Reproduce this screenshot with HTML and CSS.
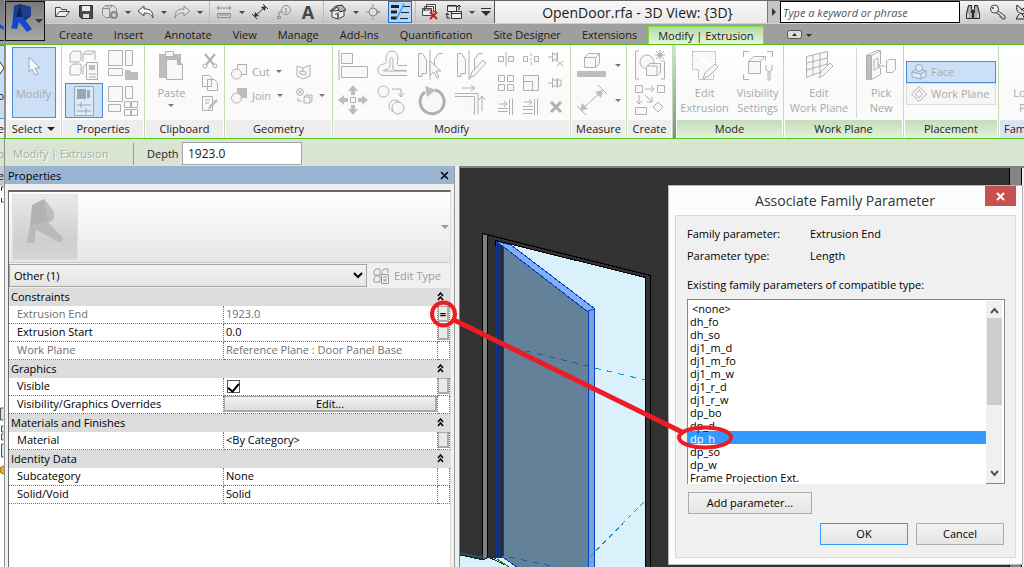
FILE: index.html
```html
<!DOCTYPE html>
<html lang="en">
<head>
<meta charset="utf-8">
<title>OpenDoor.rfa - 3D View: {3D}</title>
<link rel="stylesheet" href="styles.css">
</head>
<body>
<div class="desktop">
  <aside class="edge">
    <div class="edge-app"><svg width="4" height="40"><path d="M0 24l4 3v3l-4-2z" fill="#1a4fd0"/></svg></div>
    <div class="edge-tabs"></div>
    <div class="edge-ribbon"><svg width="4" height="16"><path d="M0 2l4 6-4 6" fill="#fff" stroke="#333"/></svg><span>o</span></div>
    <div class="edge-label">e</div>
    <div class="edge-options">o</div>
    <div class="edge-title">e</div>
    <div class="edge-body">
      <svg width="5" height="380"><path d="M2.500 5v-4h2M2.500 12v4h2" stroke="#333" fill="none"/><path d="M4.500 222h-3v12h3M4.500 240h-2v6h2M4.500 248h-2v6h2M4.500 258h-2v13h2" stroke="#555" fill="#cde"/><circle cx="5" cy="284" r="4" fill="#e8b020" stroke="#a67a10"/></svg>
    </div>
  </aside>

  <div class="window">
    <header class="top">
      <button class="app" aria-label="Application menu">
        <svg width="38" height="38" viewBox="0 0 38 38"><path d="M8 4l6-2 11 3v9l-5 4-11 3z" fill="#16327e"/><path d="M8 6l9-3 8 3v7l-7 2z" fill="#1c418e"/><path d="M8 6l7 7-2 5-6 9-1-1z" fill="#0f3ca8"/><path d="M9 15l8 0 9 12-5 3-8-10-2 7-6-1z" fill="#1148cc"/><path d="M14 3l2 11-6 1z" fill="#0c2354"/><path d="M29 17h8l-4 4z" fill="#333"/></svg>
      </button>
      <div class="top-main">
        <div class="titlebar">
          <div class="qat">
            <button aria-label="Open"><svg width="18" height="16"><path d="M2.500 12.500v-9h5l1 2h5v2M2.500 12.500l4-5h10l-4 5z" fill="#eee" stroke="#444"/></svg></button>
            <button aria-label="Save"><svg width="16" height="16"><path d="M1.500 1.500h13v13h-11l-2-2z" fill="#444b55" stroke="#333"/><path d="M4 2h8v5H4z" fill="#eee"/><path d="M5 10h6v4H5z" fill="#ddd"/></svg></button>
            <button aria-label="Synchronize"><svg width="18" height="16"><path d="M1.500 4.500l3-3h8l3 3v5l-4 4h-7l-3-3zM1.500 4.500h7l3-3M8.500 4.500v9M5 1.500l3 3" fill="#ddd" stroke="#8c8c8c"/><circle cx="13" cy="11" r="3" fill="#ccc" stroke="#888" stroke-width="2"/></svg></button>
            <button class="more" aria-label="Sync options"></button>
            <button aria-label="Undo"><svg width="18" height="16"><path d="M1 7l6-5v3c5 0 9 1 9 9-2-4-4-5-9-5v3z" fill="#f8f8f8" stroke="#444"/></svg></button>
            <button class="more" aria-label="Undo list"></button>
            <button aria-label="Redo"><svg width="18" height="16"><path d="M17 7l-6-5v3c-5 0-9 1-9 9 2-4 4-5 9-5v3z" fill="#ddd" stroke="#8c8c8c"/></svg></button>
            <button class="more" aria-label="Redo list"></button>
            <i class="sep"></i>
            <button aria-label="Measure"><svg width="16" height="16"><path d="M1 4h14M3 2L1 4l2 2M13 2l2 2-2 2M1.500 9.500h13v4h-13zM4 10v2M6 10v2M8 10v2M10 10v2M12 10v2" fill="none" stroke="#8a8a8a"/></svg></button>
            <button class="more" aria-label="Measure options"></button>
            <button aria-label="Aligned dimension"><svg width="18" height="16"><path d="M4 12L14 3M1 10l5 5M12 0l5 5" stroke="#333" fill="none"/><path d="M3 13l1-5 4 4zM15 2l-1 5-4-4z" fill="#333"/></svg></button>
            <button aria-label="Tag by category"><svg width="16" height="16"><circle cx="10" cy="6" r="4.500" fill="none" stroke="#8a8a8a"/><path d="M9 5l1-1v5M6 8H3v5M1.500 12.500h3v2h-3z" fill="none" stroke="#8a8a8a"/></svg></button>
            <button class="letter" aria-label="Text">A</button>
            <i class="sep"></i>
            <button aria-label="Default 3D view"><svg width="18" height="16"><path d="M3 7v6l6 2 6-3V6z" fill="#eee" stroke="#444"/><path d="M1 7l6-5 6-1 4 5-6 2-3-5-5 4z" fill="#aab0b8" stroke="#333"/><path d="M6 10h3v5M9 8v6" stroke="#444" fill="none"/></svg></button>
            <button class="more" aria-label="View options"></button>
            <button aria-label="Section"><svg width="16" height="16"><path d="M5 3l10 5-10 5z" fill="#999"/><circle cx="7" cy="8" r="4" fill="#ddd" stroke="#888"/><path d="M0 8h3M7 14v2M7 0v3" stroke="#888"/></svg></button>
            <button class="active" aria-label="Thin lines"><svg width="20" height="18"><path d="M1 3.500h8M1 9h6M1 15h6" stroke="#222" stroke-width="3"/><path d="M12 3.500h8M11 9.500h8M10 15.500h8" stroke="#222"/><path d="M14 1L6 17" stroke="#3a9cf0" stroke-width="1.500"/></svg></button>
            <i class="sep"></i>
            <button aria-label="Close hidden windows"><svg width="18" height="18"><path d="M5.500 5.500v-4h9v7h-3M3.500 8V3.500h9v6M1.500 5.500h9v7h-9zM2 7h8" fill="#eee" stroke="#444"/><path d="M9 9l7 7M16 9l-7 7" stroke="#d01818" stroke-width="2"/></svg></button>
            <button aria-label="Switch windows"><svg width="18" height="18"><path d="M2.500 2.500h9v6h-9zM6.500 8.500h10v7h-10zM7 10.500h9" fill="#eee" stroke="#333"/><path d="M3 3h8M14 7V3M12 4l2-2 2 2M2 11v4h3M1 12l1-2 2 2" stroke="#222" fill="none"/></svg></button>
            <button class="more" aria-label="Window list"></button>
            <button class="menu" aria-label="Customize toolbar"><svg width="10" height="8"><path d="M0 .500h10" stroke="#333"/><path d="M0 3h10L5 8z" fill="#333"/></svg></button>
          </div>
          <h1 class="doc">OpenDoor.rfa - 3D View: {3D}</h1>
          <div class="info">
            <button class="expand" aria-label="Expand search"><svg width="6" height="8"><path d="M1 0l4 4-4 4z" fill="#333"/></svg></button>
            <input class="search" type="text" placeholder="Type a keyword or phrase" aria-label="Search">
            <button aria-label="Find"><svg width="16" height="16"><path d="M3.500 1.500h3v3l1 2v8h-6v-5zM12.500 1.500h-3v3l-1 2v8h6v-5z" fill="#aab" stroke="#222"/><path d="M3 10v4M13 10v4" stroke="#fff"/><path d="M6 6h4v3H6z" fill="#333"/></svg></button>
            <button aria-label="Sign in"><svg width="18" height="16"><path d="M8 6l8 6v3h-3v-2h-2v-2l-4-2" fill="#ddd" stroke="#444"/><circle cx="5.500" cy="5" r="4" fill="#eee" stroke="#444"/><circle cx="4" cy="4" r="1" fill="#444"/></svg></button>
            <button aria-label="Subscription"><svg width="18" height="16"><path d="M3 1c-2 7 3 10 9 8zM12 3L7 6M5 10l-3 5h9l-3-5" fill="#ddd" stroke="#222"/></svg></button>
          </div>
        </div>
        <nav class="tabs">
          <a href="#create">Create</a><a href="#insert">Insert</a><a href="#annotate">Annotate</a><a href="#view">View</a><a href="#manage">Manage</a><a href="#addins">Add-Ins</a><a href="#quant">Quantification</a><a href="#site">Site Designer</a><a href="#ext">Extensions</a><a class="current" href="#modify">Modify | Extrusion</a>
          <button class="collapse" aria-label="Collapse ribbon"><svg width="26" height="10"><rect x=".500" y=".500" width="14" height="8" rx="2" fill="#ddd" stroke="#555"/><path d="M5 6l2.500-3L10 6zM19 4h6l-3 3z" fill="#333"/></svg></button>
        </nav>
      </div>
    </header>

    <section class="ribbon">
      <div class="panel p-select">
        <div class="tools"><button class="big on"><svg width="14" height="22"><path d="M2 1v15l3-3 3 6 3-1-3-6h5z" fill="#f4f8fc" stroke="#98a6b6"/></svg><span>Modify</span></button></div>
        <h2>Select <i class="tri"></i></h2>
      </div>
      <div class="panel p-props">
        <div class="tools grid2">
          <button aria-label="Type properties"><svg class="ic" width="30" height="30"><path d="M1 4l3-3h8v9l-2 2H1zM14 4l3-3h9v9M14 12V4h9l3-3M1 17l3-3h8v9l-2 2H1zM14 25v-8l3-3"/><rect x="17.500" y="12.500" width="11" height="17"/><path class="s" d="M20 15h6v5h-6z"/><path d="M20 24h7M20 27h7"/></svg></button>
          <button aria-label="Family category"><svg class="ic" width="30" height="30"><path d="M.500.500h14v15H.500zM17.500.500h7v15h-7zM.500 18.500h14v7H.500z"/><path class="s" d="M17 20h5l1 2h7v8H17z"/></svg></button>
          <button class="on" aria-label="Properties"><svg class="ic" width="22" height="30"><path d="M1.500.500h19v29h-19z"/><path class="s" d="M4 3h9v10H4zM14 4h3v8h-3z"/><path d="M4 19h14M4 25h14M8 16v6M13 22v6"/></svg></button>
          <button aria-label="Family types"><svg class="ic" width="30" height="30"><path d="M.500.500h14v15H.500zM17.500.500h7v12h-7zM.500 18.500h12v7H.500zM16.500 15.500h6v6h-6zM23.500 15.500h6v6h-6zM16.500 23.500h6v6h-6zM23.500 23.500h6v6h-6z"/></svg></button>
        </div>
        <h2>Properties</h2>
      </div>
      <div class="panel p-clip">
        <div class="tools">
          <button class="big"><svg class="ic" width="26" height="31"><path class="s" d="M1 4h22v24H1z"/><path d="M7.500 1.500h8v5h-8zM8.500 9.500h11l5 5v15h-16zM19.500 9.500v5h5"/></svg><span>Paste</span><i class="tri"></i></button>
          <div class="stack">
            <button aria-label="Cut"><svg class="ic" width="16" height="16"><path stroke-width="2" d="M3 1l9 11M13 1L4 12"/><circle cx="3" cy="13" r="2"/><circle cx="13" cy="13" r="2"/></svg></button>
            <button aria-label="Copy"><svg class="ic" width="16" height="16"><path d="M.500.500h7l2 2v9h-9zM5.500 4.500h7l3 3v8h-10z"/></svg></button>
            <button aria-label="Match type"><svg class="ic" width="16" height="16"><path d="M.500.500h10v14H.500zM3 4h5M3 7h4"/><path class="s" d="M14 3l2 2-6 6-5 4 3-6z"/></svg></button>
          </div>
        </div>
        <h2>Clipboard</h2>
      </div>
      <div class="panel p-geom">
        <div class="tools geom">
          <button><svg class="ic" width="17" height="16"><path d="M6.500.500h9v10h-9z"/><circle cx="5.500" cy="10" r="5"/></svg>Cut <i class="tri"></i></button>
          <button aria-label="Wall joins"><svg class="ic" width="16" height="16"><path d="M1 2l6 2 7-3v11l-7 3-6-3zM7 4v3M4 7l6 1v3l-6-1z"/></svg></button>
          <button><svg class="ic" width="17" height="16"><path class="s" d="M6 0h10v10H6z"/><circle cx="5.500" cy="10" r="5"/></svg>Join <i class="tri"></i></button>
          <button aria-label="Split face"><svg class="ic" width="17" height="16"><circle cx="4" cy="4" r="3.500"/><path d="M2 2l4 4M6 2L2 6M2 10v3h4M8 9l2-2h6v6l-2 2H8zM8 9h6v6"/></svg><i class="tri"></i></button>
        </div>
        <h2>Geometry</h2>
      </div>
      <div class="panel p-mod">
        <div class="tools">
          <div class="grid4">
            <button aria-label="Align"><svg class="ic" width="30" height="30"><path d="M1 0v30M3.500 3.500h11v10h-11zM3.500 16.500h26v11h-26z"/></svg></button>
            <button aria-label="Offset"><svg class="ic" width="30" height="30"><path d="M30 15.500h-8c-3 0-1-4-1-8s-3-6.500-6-6.500-6 2.500-6 6.500 1 5-1 6-7 1-7 6 3 6 6 6h23"/><path d="M30 20.500H19c-4 0-3-4-3-7s0-6-1.500-6-1.500 3-1.500 6 0 5-4 6-3 1.500-1 1.500h22"/></svg></button>
            <button aria-label="Mirror by axis"><svg class="ic" width="30" height="30"><path d="M2.500 3.500h4l4 6v14H6v3H2.500zM14 0v30M26.500 3.500h-4l-4 6v14"/><path d="M14 11v14l4-3 3 6 2-1-3-6h5z"/></svg></button>
            <button aria-label="Mirror by line"><svg class="ic" width="30" height="30"><path d="M2.500 3.500h4l4 6v14H6v3H2.500zM14 0v30M27.500 3.500h-4l-4 6v11M15 28l2-6L28 10l3 3-11 12z"/></svg></button>
            <button aria-label="Move"><svg class="ic" width="30" height="30"><path class="s" d="M15 0l5 6h-3v4h-4V6h-3zM15 30l5-6h-3v-4h-4v4h-3zM0 15l6-5v3h4v4H6v3zM30 15l-6-5v3h-4v4h4v3z"/><path d="M12.500 12.500h5v5h-5z"/></svg></button>
            <button aria-label="Copy elements"><svg class="ic" width="30" height="30"><circle cx="6.500" cy="6.500" r="5.500"/><circle cx="18" cy="21" r="6"/><circle cx="21" cy="23" r="6"/><path d="M15 4h9v7M21 8l3 4 3-4"/></svg></button>
            <button aria-label="Rotate"><svg class="ic" width="30" height="30"><path d="M9 7A12 12 0 1 0 19 5" stroke-width="3"/><path class="s" d="M9 1l11 4-9 7z"/></svg></button>
            <button aria-label="Trim to corner"><svg class="ic" width="30" height="30"><path d="M0 8.500h23v21M0 11.500h19.500v18M7 3h12M16 0l4 3-4 3M27 26V12M24 15l3-4 3 4"/></svg></button>
          </div>
          <div class="grid3">
            <button aria-label="Split"><svg class="ic" width="16" height="16"><path d="M.500 5.500h5v5h-5zM10.500 5.500h5v5h-5zM8 1v14"/></svg></button>
            <button aria-label="Split with gap"><svg class="ic" width="16" height="16"><path d="M.500 5.500h4v5h-4zM11.500 5.500h4v5h-4zM8 2v3M8 7v2M8 11v3"/></svg></button>
            <button aria-label="Unpin"><svg class="ic" width="16" height="16"><path d="M0 6h4M4.500 1v10M4 3h5v6H4M9.500 1v9M9 10l6 5M15 10l-6 5"/></svg></button>
            <button aria-label="Array"><svg class="ic" width="16" height="16"><path d="M.500.500h6v6h-6zM9.500.500h6v6h-6zM.500 9.500h6v6h-6zM9.500 9.500h6v6h-6z"/></svg></button>
            <button aria-label="Scale"><svg class="ic" width="16" height="16"><path d="M.500.500h15v15H.500zM.500 6.500h9v9"/></svg></button>
            <button aria-label="Pin"><svg class="ic" width="16" height="16"><path d="M0 8h4M4.500 3v10M4 5h5v6H4M9.500 3v10M10 5h3v6h-3"/></svg></button>
            <button aria-label="Trim single"><svg class="ic" width="16" height="16"><path d="M1 5h8M6 2l3 3-3 3M0 9.500h10M0 12.500h10M11.500 0v16M14.500 0v16"/></svg></button>
            <button aria-label="Trim multiple"><svg class="ic" width="16" height="16"><path d="M1 3h8M6 0l3 3-3 3M0 7.500h10M0 10.500h10M0 14.500h10M11.500 0v16M14.500 0v16"/></svg></button>
            <button aria-label="Delete"><svg class="ic" width="16" height="16"><path d="M3 3l10 10M13 3L3 13" stroke-width="3"/></svg></button>
          </div>
        </div>
        <h2>Modify</h2>
      </div>
      <div class="panel p-meas">
        <div class="tools rows">
          <button aria-label="Measure between"><svg class="ic" width="30" height="30"><path d="M7.500 7.500l4-4h11v10l-4 4h-11zM7.500 7.500h11v10M18.500 7.500l4-4"/><path class="s" d="M0 21h29v6H0z"/></svg><i class="tri"></i></button>
          <button aria-label="Dimension"><svg class="ic" width="30" height="30"><path d="M4 25L25 6M0 21l9 9M21 0l9 9"/><path class="s" d="M3 26l2-8 6 6zM26 5l-2 8-6-6z"/></svg><i class="tri"></i></button>
        </div>
        <h2>Measure</h2>
      </div>
      <div class="panel p-create">
        <div class="tools rows">
          <button aria-label="Create group"><svg class="ic" width="30" height="30"><path d="M4 1H.500v28H4M26 11h3.500v18H26"/><circle cx="12" cy="12" r="7"/><path d="M11.500 16.500l3-3h11v9l-3 3h-11zM12 16h10v9"/><circle cx="25" cy="5" r="2"/><path d="M25 0v10M20 5h10M21 1l8 8M29 1l-8 8"/></svg></button>
          <button aria-label="Create similar"><svg class="ic" width="30" height="30"><path d="M.500.500h7v7h-7zM22.500.500h7v7h-7zM.500 22.500h11v7H.500zM23 17l5 5-5 5-5-5zM10 4h9M16 1l3 3-3 3M4 10v9M1 16l3 3 3-3M10 10l7 7M12 17h5v-5"/></svg></button>
        </div>
        <h2>Create</h2>
      </div>
      <div class="divider"></div>
      <div class="panel p-mode context">
        <div class="tools">
          <button class="big"><svg class="ic" width="28" height="31"><path stroke-dasharray="2 1" d="M1.500 1.500h23v15M1.500 1.500v18h6v10h15v-6"/><path d="M12 29l2-6 10-9 3 3-9 9z"/></svg><span>Edit<br>Extrusion</span></button>
          <button class="big"><svg class="ic" width="32" height="31"><path d="M1.500 7V1.500H7M25 1.500h5.500V7M1.500 24v5.500H7M6.500 11.500l5-5h12v4M6.500 11.500h12v12h-12zM18.500 11.500l4-5M27 22v8"/><path d="M24 15v5l3 2 3-2v-5M26 22v8h2v-8"/></svg><span>Visibility<br>Settings</span></button>
        </div>
        <h2>Mode</h2>
      </div>
      <div class="panel p-work context">
        <div class="tools">
          <button class="big"><svg class="ic" width="28" height="31"><path d="M1.500 6.500l21-5v18l-21 8zM1.500 13l21-5M1.500 20l21-6M8 5v20M15 3v19"/><path d="M14 28l2-6 9-9 3 3-9 9z"/></svg><span>Edit<br>Work Plane</span></button>
          <i class="rule"></i>
          <button class="big"><svg class="ic" width="32" height="31"><path d="M1.500 5.500l10-5h4v24l-9 5h-5zM1.500 5.500h5v24M6.500 5.500l9-5M9 10l4-2v10l-4 2z"/><path class="s" d="M2 6h4v23H2z"/><path d="M13 16h7M16 13l-3 3 3 3M21.500 11.500l3-2h6v10l-3 3h-6z"/></svg><span>Pick<br>New</span></button>
        </div>
        <h2>Work Plane</h2>
      </div>
      <div class="panel p-place context">
        <div class="tools rows">
          <button class="opt on"><svg class="ic" width="16" height="16"><path d="M1 8l5-3 9 2v5l-5 3-9-2zM1 8l9 2 5-3M10 10v5"/><circle cx="8" cy="4" r="3.500"/></svg>Face</button>
          <button class="opt"><svg class="ic" width="16" height="16"><path d="M8 .500L15.500 8 8 15.500.500 8zM4.500 8L8 4l3.500 4L8 12z"/></svg>Work Plane</button>
        </div>
        <h2>Placement</h2>
      </div>
      <div class="panel p-fam">
        <div class="tools"><span class="cut">Lo<br>&nbsp;&nbsp;P</span></div>
        <h2>Fam</h2>
      </div>
    </section>

    <div class="options">
      <span class="mode">Modify | Extrusion</span>
      <label for="depth">Depth</label>
      <input id="depth" type="text" value="1923.0">
    </div>

    <main class="work">
      <section class="palette">
        <div class="palette-title"><h2>Properties</h2><button aria-label="Close properties"><svg width="9" height="9"><path d="M1 1l7 7M8 1L1 8" stroke="#000" stroke-width="1.500"/></svg></button></div>
        <div class="palette-body">
          <button class="type" aria-label="Type selector">
            <svg class="thumb" width="66" height="66"><defs><linearGradient id="tg" x2="0" y2="1"><stop offset="0" stop-color="#eaeaea"/><stop offset=".700" stop-color="#cfcfcf"/><stop offset="1" stop-color="#d6d6d6"/></linearGradient></defs><rect x=".500" y=".500" width="65" height="65" fill="url(#tg)" stroke="#e0e0e0"/><path d="M20 11l12-6 10 13-1 8-9 4-14 2z" fill="#b2b2b2"/><path d="M18 31l18-3 15 16-2 5-25-13-2 13h-7z" fill="#bababa"/><path d="M32 5l4 22 6-2V18z" fill="#bdbdbd"/></svg>
            <i class="tri"></i>
          </button>
          <div class="filter">
            <select aria-label="Filter"><option>Other (1)</option></select>
            <button><svg width="16" height="16"><path d="M1 3l2-2h4v6H1zM9 6V3l2-2h4v4M1 10l2-2h4v6H1z" fill="none" stroke="#9a9a9a"/><path d="M8.500 6.500h7v9h-7zM10 9h4M10 12h4M12 11v3" fill="none" stroke="#9a9a9a"/></svg>Edit Type</button>
          </div>
          <table>
            <colgroup><col class="c-name"><col><col class="c-btn"></colgroup>
            <tr class="group"><th colspan="3">Constraints<svg width="7" height="9"><path d="M1 4l2.500-3L6 4M1 8l2.500-3L6 8" fill="none" stroke="#000" stroke-width="1.500"/></svg></th></tr>
            <tr class="dim"><td>Extrusion End</td><td>1923.0</td><td><button class="tiny" aria-label="Associate parameter">=</button></td></tr>
            <tr><td>Extrusion Start</td><td>0.0</td><td><button class="tiny" aria-label="Associate start"></button></td></tr>
            <tr class="dim"><td>Work Plane</td><td>Reference Plane : Door Panel Base</td><td></td></tr>
            <tr class="group"><th colspan="3">Graphics<svg width="7" height="9"><path d="M1 4l2.500-3L6 4M1 8l2.500-3L6 8" fill="none" stroke="#000" stroke-width="1.500"/></svg></th></tr>
            <tr><td><label for="vis">Visible</label></td><td><input id="vis" type="checkbox" checked></td><td><button class="tiny" aria-label="Associate visible"></button></td></tr>
            <tr><td>Visibility/Graphics Overrides</td><td class="fill"><button class="wide">Edit...</button></td><td></td></tr>
            <tr class="group"><th colspan="3">Materials and Finishes<svg width="7" height="9"><path d="M1 4l2.500-3L6 4M1 8l2.500-3L6 8" fill="none" stroke="#000" stroke-width="1.500"/></svg></th></tr>
            <tr><td>Material</td><td>&lt;By Category&gt;</td><td><button class="tiny" aria-label="Associate material"></button></td></tr>
            <tr class="group"><th colspan="3">Identity Data<svg width="7" height="9"><path d="M1 4l2.500-3L6 4M1 8l2.500-3L6 8" fill="none" stroke="#000" stroke-width="1.500"/></svg></th></tr>
            <tr><td>Subcategory</td><td>None</td><td></td></tr>
            <tr><td>Solid/Void</td><td>Solid</td><td></td></tr>
          </table>
        </div>
      </section>
      <section class="view">
        <svg width="564" height="399" viewBox="460 168 564 399" shape-rendering="crispEdges">
          <path d="M505 243L645 278V567H490V562z" fill="#daf1fc"/>
          <path d="M483 234h4v326h-4z" fill="#808080"/>
          <path d="M487 235h9v324h-9z" fill="#303030"/>
          <path d="M496 242h7v316h-7z" fill="#1c2c4c"/>
          <path d="M503 244L588 311V567H518L503 557z" fill="#64819a"/>
          <path d="M496 241l15 4 84 64-7 3z" fill="#84aef8" stroke="#083fc4"/>
          <path d="M588 311l6-2V568h-6z" fill="#7aa3d8" stroke="#083fc4"/>
          <path d="M496.500 242V558M499.500 244V556M503.500 247V556" stroke="#0a38b4" fill="none"/>
          <path d="M482.500 560V233.500L650.500 275.500V567M487.500 558V236M495.500 240.500L645.500 277.500V567M495.500 240V246" stroke="#000" fill="none"/>
          <path d="M460 555l24 5 4-3 8 2 16 8H460z" fill="#daf1fc"/>
          <path d="M460 555l24 5 4-3 20 9M482.500 560v-6" stroke="#123" fill="none"/>
          <path d="M460 553l24 5" stroke="#2a5060" stroke-width="2"/>
          <path d="M497 559l12 8" stroke="#1c8a2c"/><path d="M501 556l16 11" stroke="#083fc4"/>
          <path d="M514 348L588 366M509 557L556 567" stroke="#175f92" stroke-dasharray="6 6"/>
          <path d="M595 368L645 380" stroke="#1096d0" stroke-dasharray="6 6"/>
          <path d="M644 502L580 567" stroke="#1096d0" stroke-dasharray="5 4"/>
          <path d="M1009.500 168V567M1021.500 168V567" stroke="#000"/><path d="M1010 168h11V567h-11z" fill="#858585"/><path d="M1022 168h2V567h-2z" fill="#eee"/>
        </svg>
      </section>
    </main>
  </div>

  <div class="dialog" role="dialog" aria-labelledby="dlg">
    <div class="dlg-head"><h2 id="dlg">Associate Family Parameter</h2><button aria-label="Close"><svg width="9" height="9"><path d="M1 1l7 7M8 1L1 8" stroke="#fff" stroke-width="2"/></svg></button></div>
    <div class="dlg-body">
      <dl><dt>Family parameter:</dt><dd>Extrusion End</dd><dt>Parameter type:</dt><dd>Length</dd></dl>
      <label for="params">Existing family parameters of compatible type:</label>
      <div class="listbox">
        <select id="params" size="14">
          <option>&lt;none&gt;</option><option>dh_fo</option><option>dh_so</option><option>dj1_m_d</option><option>dj1_m_fo</option><option>dj1_m_w</option><option>dj1_r_d</option><option>dj1_r_w</option><option>dp_bo</option><option>dp_d</option><option selected>dp_h</option><option>dp_so</option><option>dp_w</option><option>Frame Projection Ext.</option>
        </select>
        <div class="scroll">
          <svg width="9" height="7"><path d="M1 6l3.500-4L8 6" fill="none" stroke="#555" stroke-width="2"/></svg>
          <i></i>
          <svg width="9" height="7"><path d="M1 1l3.500 4L8 1" fill="none" stroke="#555" stroke-width="2"/></svg>
        </div>
      </div>
      <button class="btn add">Add parameter...</button>
      <div class="actions"><button class="btn ok">OK</button><button class="btn">Cancel</button></div>
    </div>
  </div>

  <svg class="markup" width="1024" height="567" fill="none" stroke="#ed1c24">
    <circle cx="443.500" cy="314" r="11.500" stroke-width="4"/>
    <path d="M454 320L684 433" stroke-width="5"/>
    <ellipse cx="705" cy="437.500" rx="26" ry="10" stroke-width="4"/>
  </svg>
</div>
</body>
</html>
```
FILE: styles.css
```css
* { box-sizing: border-box; }
body { margin: 0; font: 11px/16px "Open Sans", "Noto Sans", sans-serif; color: #1a1a1a; background: #f0f0f0; }
h1, h2, dl, dd { margin: 0; font-weight: normal; font-size: inherit; }
button, input, select { font: inherit; color: inherit; margin: 0; padding: 0; border-radius: 0; }
button { background: none; border: 0; display: flex; align-items: center; justify-content: center; }
svg { display: block; flex: none; }
a { color: inherit; text-decoration: none; }

.desktop { position: relative; display: flex; height: 100vh; overflow: hidden; }

.edge { width: 5px; flex: none; display: flex; flex-direction: column; overflow: hidden; border-right: 1px solid #8f8f8f; white-space: nowrap; background: #fff; }
.edge > div { flex: none; display: flex; justify-content: flex-end; align-items: center; }
.edge .edge-app { height: 41px; background: linear-gradient(#777, #999); border-bottom: 1px solid #111; }
.edge .edge-tabs { height: 4px; background: #9f9f9f; border-bottom: 1px solid #58c41c; }
.edge .edge-ribbon { height: 74px; background: #c5ddf5; border: 1px solid #4a8edb; border-width: 1px 0; flex-direction: column; align-items: flex-end; justify-content: center; gap: 12px; }
.edge .edge-label { height: 20px; background: #eee; border-bottom: 1px solid #58c41c; }
.edge .edge-options { height: 27px; padding-top: 2px; background: #d9e4d3; color: #a9a9a9; }
.edge .edge-title { height: 20px; background: #bccbdc; }
.edge .edge-body { flex: 1; align-items: flex-start; background: #fff; }

.window { flex: 1; min-width: 0; display: flex; flex-direction: column; }
.top { display: flex; height: 44px; background: #9f9f9f; border-top: 1px solid #6a6465; }
.app { width: 40px; height: 40px; border: 1px solid #111; background: linear-gradient(#7a7a7a, #a8a8a8); flex: none; }
.top-main { flex: 1; min-width: 0; display: flex; flex-direction: column; }
.titlebar { display: flex; height: 23px; background: linear-gradient(#f6f6f6, #ececec); border-bottom: 1px solid #d0d0d0; }
.qat { display: flex; align-items: center; padding-left: 5px; background: linear-gradient(#eee, #c4c4c4); border-right: 1px solid #555; flex: none; }
.qat button { width: 24px; height: 22px; flex: none; }
.qat .more { width: 12px; }
.qat .more::after { content: ""; border: 3px solid transparent; border-top-color: #444; border-bottom: 0; }
.qat .menu { width: 16px; }
.qat .letter { font: bold 18px/22px "Open Sans", sans-serif; color: #444; }
.qat .active { background: #b4d8fa; border: 1px solid #1e6fc8; margin-left: 2px; }
.sep { width: 6px; height: 22px; flex: none; background: linear-gradient(#bbb, #bbb) center / 1px 100% no-repeat; }
.doc { flex: 1; text-align: center; font-size: 14px; line-height: 23px; padding-left: 13px; white-space: nowrap; overflow: hidden; }
.info { display: flex; align-items: center; flex: none; width: 257px; overflow: hidden; background: linear-gradient(#f4f4f4, #ccc); }
.info button { width: 25px; flex: none; }
.info .expand { width: 13px; height: 22px; background: #c4c4c4; border-left: 1px solid #777; }
.search { width: 180px; height: 22px; border: 1px solid #000; background: #fff; padding: 0 2px; font-style: italic; flex: none; }
.search::placeholder { color: #555; }
.tabs { flex: 1; display: flex; align-items: flex-end; gap: 1px; padding-left: 4px; white-space: nowrap; }
.tabs a { padding: 0 10px; line-height: 18px; }
.tabs .current { border: 1px solid #7be03c; border-bottom: 0; padding: 0 9px; line-height: 17px; background: linear-gradient(#b3d8a8, #e4f8da); }
.collapse { padding: 0 22px 4px; }

.ribbon { display: flex; height: 95px; border: solid #58c41c; border-width: 1px 0 1px 1px; background: #d4e8cc; overflow: hidden; flex: none; }
.panel { display: flex; flex-direction: column; flex: none; background: linear-gradient(#fff, #f9f9f9 60%, #fff); border-right: 1px solid #c3dcb8; color: #a9a9a9; overflow: hidden; }
.panel h2 { height: 18px; margin: 0 1px; background: #ededed; color: #222; display: flex; align-items: center; justify-content: center; gap: 6px; flex: none; white-space: nowrap; }
.panel.context h2 { background: linear-gradient(#c4dcba, #e2f3da); }
.panel button { flex: none; }
.tools { flex: 1; display: flex; justify-content: center; padding: 2px 0; min-height: 0; }
.tri { border: 3px solid transparent; border-top-color: #777; border-bottom: 0; }
.ic { fill: #f8f8f8; stroke: #b0b0b0; overflow: visible; }
.ic .s { fill: #bdbdbd; stroke: none; }
.panel .on { background: #cbe0f6; border: 1px solid #4a8edb; }
.on .ic { fill: #dce9f6; stroke: #98a8ba; }
.on .ic .s { fill: #98a8ba; }
.big { flex-direction: column; justify-content: flex-start; padding-top: 3px; gap: 4px; line-height: 15px; }
.p-select { width: 56px; }
.p-select .big { width: 44px; padding-top: 8px; gap: 8px; }
.p-select h2 { gap: 5px; }
.p-select h2 .tri { border-width: 4px 4px 0; border-top-color: #222; }
.p-props { width: 83px; }
.grid2 { display: grid; grid-template: 35px 35px / 38px 38px; gap: 1px; align-content: center; }
.p-clip { width: 80px; }
.p-clip .tools { gap: 16px; padding-left: 6px; }
.stack { display: flex; flex-direction: column; justify-content: space-evenly; }
.p-geom { width: 108px; }
.geom { display: grid; grid-template-columns: 65px 30px; grid-auto-rows: 24px; align-content: center; justify-content: center; padding-top: 4px; }
.geom button { justify-content: flex-start; gap: 4px; }
.geom .tri { margin-left: 2px; }
.p-mod { width: 238px; }
.p-mod .tools { gap: 4px; padding-right: 2px; }
.grid4 { display: grid; grid-template: 35px 35px / repeat(4, 39px); align-content: center; }
.grid3 { display: grid; grid-template: repeat(3, 24px) / repeat(3, 25px); align-content: center; }
.rows { flex-direction: column; align-items: center; justify-content: center; gap: 5px; }
.rows button { gap: 8px; }
.p-meas { width: 56px; }
.p-create { width: 46px; }
.divider { width: 3px; flex: none; background: linear-gradient(#d4e8cc, #888); }
.p-mode { width: 108px; }
.p-mode .tools { gap: 8px; }
.p-work { width: 120px; }
.p-work .tools { gap: 8px; }
.rule { width: 1px; background: #d8d8d8; }
.p-place { width: 95px; }
.p-place .rows { gap: 0; padding-top: 2px; }
.opt { width: 90px; height: 22px; border: 1px solid #ddd; background: #f6f6f6; }
.rows .opt { justify-content: flex-start; padding-left: 4px; gap: 4px; white-space: nowrap; }
.p-fam { flex: 1; border: 0; }
.p-fam h2 { justify-content: flex-start; padding-left: 4px; background: #dde2f2; margin-right: 0; }
.cut { padding-top: 38px; line-height: 15px; margin-left: 16px; }

.options { display: flex; align-items: center; height: 27px; background: #d9e4d3; flex: none; padding: 2px 0 0 8px; }
.mode { color: #a6aca3; text-shadow: 1px 1px #fff; width: 121px; border-right: 1px solid #999; line-height: 22px; margin-right: 13px; white-space: nowrap; }
.options label { width: 35px; }
.options input { width: 120px; height: 23px; border: 1px solid #a5a5a5; padding: 0 5px; background: #fff; font-size: 12px; }

.work { flex: 1; min-height: 0; display: flex; }
.palette { width: 450px; flex: none; display: flex; flex-direction: column; background: #f0f0f0; color: #000; border-right: 1px solid #999; }
.palette-title { display: flex; align-items: center; justify-content: space-between; height: 18px; background: #99b4d1; padding: 1px 5px 0 3px; flex: none; }
.palette-body { flex: 1; margin: 6px 3px 0; border: solid #696969; border-width: 2px 1px 0; border-right-color: #ddd; background: #fff; }
.type { width: 100%; height: 71px; justify-content: space-between; padding: 0 1px 0 3px; background: linear-gradient(#fff, #e6e6e6); border-bottom: 1px solid #ccc; }
.type .tri { border-width: 4px 4px 0; border-top-color: #999; }
.filter { display: flex; align-items: center; height: 25px; background: #f0f0f0; }
.filter select { width: 358px; height: 23px; border: 1px solid #a5a5a5; background: linear-gradient(#f2f2f2, #e5e5e5); }
.filter button { color: #9d9d9d; gap: 5px; margin-left: 6px; }
table { width: 100%; border-collapse: separate; border-spacing: 0; table-layout: fixed; }
.c-name { width: 215px; }
.c-btn { width: 12px; }
tr { height: 18px; }
td, th { padding: 0; height: 18px; line-height: 16px; font-weight: normal; text-align: left; vertical-align: top; white-space: nowrap; }
td { border: dotted #777; border-width: 0 1px 1px 0; padding-left: 2px; }
td:first-child { padding-left: 8px; }
td:last-child { padding: 0; }
.group th { background: #dcdcdc; padding: 0 6px 0 2px; line-height: 18px; }
.group svg { float: right; margin-top: 4px; }
.dim { color: #6f6f6f; }
.tiny { width: 11px; height: 16px; border: 1px solid #aaa; border-width: 1px 2px 2px 1px; background: #e9e9e9; color: #000; font-weight: bold; line-height: 12px; }
td.fill { padding: 0; }
.wide { width: 100%; height: 16px; border: 1px solid #aaa; border-width: 1px 2px 2px 1px; background: linear-gradient(#f2f2f2, #ddd); }
input[type="checkbox"] { appearance: none; display: flex; align-items: flex-start; justify-content: center; width: 13px; height: 13px; margin: 2px 0 0 1px; border: 1px solid #555; background: #fff; }
input[type="checkbox"]::before { content: ""; width: 5px; height: 9px; border: solid #000; border-width: 0 2px 2px 0; transform: rotate(40deg); }
.view { flex: 1; min-width: 0; margin-left: 4px; border: solid #808080; border-width: 2px 0 0 1px; background: #323232; overflow: hidden; }

.dialog { position: absolute; left: 668px; top: 185px; width: 355px; padding: 0 6px 6px; background: #fcfcfc; border: 1px solid #b5b5b5; color: #000; }
.dlg-head { display: flex; height: 29px; align-items: flex-start; }
.dlg-head h2 { flex: 1; text-align: center; font-size: 14px; line-height: 29px; color: #333; padding-left: 30px; }
.dlg-head button { width: 31px; height: 20px; background: #c75050; }
.dlg-body { border: 1px solid #d9d9d9; background: #f0f0f0; padding: 7px 10px 12px 11px; display: flex; flex-direction: column; }
dl { display: grid; grid-template-columns: 123px 1fr; line-height: 22px; }
.dlg-body > label { line-height: 16px; margin: 10px 0 6px; }
.listbox { display: flex; height: 185px; border: 1px solid #828790; background: #fff; padding: 1px 2px 0 0; }
.listbox select { flex: 1; height: 183px; border: 0; outline: 0; overflow: hidden; background: #fff; scrollbar-width: none; }
.listbox option { padding: 0 2px; height: 13px; min-height: 13px; line-height: 12px; }
.listbox option:first-child { padding-left: 4px; }
.listbox option:checked { background: linear-gradient(#39f, #39f); -webkit-text-fill-color: #fff; }
.scroll { width: 16px; background: #f0f0f0; display: flex; flex-direction: column; align-items: center; padding: 6px 0; }
.scroll i { width: 15px; height: 87px; background: #cdcdcd; margin: 4px 0 auto; }
.btn { height: 22px; width: 88px; border: 1px solid #acacac; background: linear-gradient(#f2f2f2, #e5e5e5); }
.add { width: 124px; margin: 8px 0 9px 1px; }
.actions { display: flex; justify-content: flex-end; gap: 8px; padding-right: 1px; }
.ok { border-color: #3399ff; }
.markup { position: absolute; left: 0; top: 0; pointer-events: none; }
```
